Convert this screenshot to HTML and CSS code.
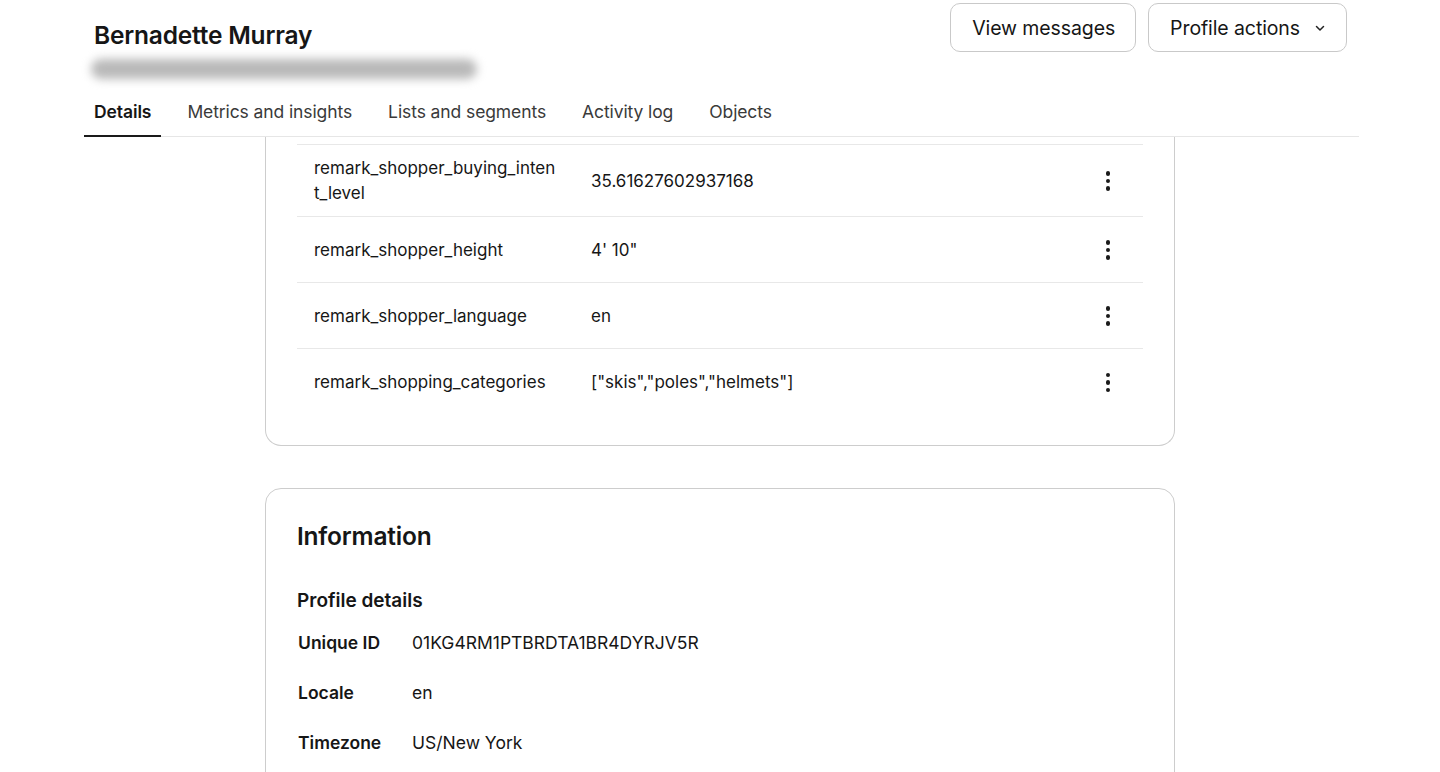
FILE: index.html
```html
<!DOCTYPE html>
<html lang="en">
<head>
<meta charset="utf-8">
<title>Bernadette Murray – Profile</title>
<link rel="stylesheet" href="styles.css">
</head>
<body>
<div class="page">
  <header class="profile-header">
    <div class="top">
      <div class="identity">
        <h1 class="name">Bernadette Murray</h1>
        <div class="email-redacted"></div>
      </div>
      <div class="actions">
        <button class="btn">View messages</button>
        <button class="btn">Profile actions
          <svg class="chev" width="12" height="12" viewBox="0 0 12 12" aria-hidden="true"><path d="M2.5 4.5 6 8l3.5-3.5" fill="none" stroke="currentColor" stroke-width="1.5" stroke-linecap="round" stroke-linejoin="round"/></svg>
        </button>
      </div>
    </div>
    <nav class="tabs">
      <a class="tab active">Details</a>
      <a class="tab">Metrics and insights</a>
      <a class="tab">Lists and segments</a>
      <a class="tab">Activity log</a>
      <a class="tab">Objects</a>
    </nav>
  </header>

  <main class="content">
    <section class="card card-cont">
      <div class="prop-list">
        <div class="prop-row">
          <div class="prop-key">remark_shopper_buying_intent_level</div>
          <div class="prop-val">35.61627602937168</div>
          <button class="more" aria-label="More"><span></span><span></span><span></span></button>
        </div>
        <div class="prop-row">
          <div class="prop-key">remark_shopper_height</div>
          <div class="prop-val">4' 10"</div>
          <button class="more" aria-label="More"><span></span><span></span><span></span></button>
        </div>
        <div class="prop-row">
          <div class="prop-key">remark_shopper_language</div>
          <div class="prop-val">en</div>
          <button class="more" aria-label="More"><span></span><span></span><span></span></button>
        </div>
        <div class="prop-row">
          <div class="prop-key">remark_shopping_categories</div>
          <div class="prop-val">["skis","poles","helmets"]</div>
          <button class="more" aria-label="More"><span></span><span></span><span></span></button>
        </div>
      </div>
    </section>

    <section class="card info">
      <h2 class="card-title">Information</h2>
      <h3 class="sub-title">Profile details</h3>
      <dl class="details">
        <div class="detail-row"><dt>Unique ID</dt><dd>01KG4RM1PTBRDTA1BR4DYRJV5R</dd></div>
        <div class="detail-row"><dt>Locale</dt><dd>en</dd></div>
        <div class="detail-row"><dt>Timezone</dt><dd>US/New York</dd></div>
      </dl>
    </section>
  </main>
</div>
</body>
</html>
```

FILE: styles.css
```css
* { box-sizing: border-box; }

html, body {
  margin: 0;
  padding: 0;
  background: #fff;
  color: #161616;
  font-family: Inter, "Noto Sans", "Liberation Sans", sans-serif;
  overflow: hidden;
}

.page {
  width: 1275px;
  margin-left: 84px;
}

/* header */
.top {
  display: flex;
  justify-content: space-between;
  align-items: flex-start;
  padding: 3px 12px 0 10px;
}

.identity { padding-top: 17px; }

.name {
  margin: 0;
  font-size: 24.5px;
  line-height: 30px;
  font-weight: 600;
  letter-spacing: -0.2px;
}

.email-redacted {
  margin-top: 9px;
  width: 386px;
  height: 20px;
  margin-left: -3px;
  border-radius: 10px;
  background: #b9b9b9;
  filter: blur(5px);
}

.actions { display: flex; gap: 12px; }

.btn {
  display: inline-flex;
  align-items: center;
  gap: 14px;
  height: 49px;
  padding: 0 20px 0 21px;
  border: 1px solid #c9c9c9;
  border-radius: 10px;
  background: #fff;
  color: #161616;
  font-family: inherit;
  font-size: 19.5px;
  letter-spacing: -0.1px;
}

.chev { color: #222; }

/* tabs */
.tabs {
  display: flex;
  gap: 16px;
  margin-top: 8px;
  border-bottom: 1px solid #e6e6e6;
}

.tab {
  padding: 12px 10px 11px;
  margin-bottom: -1px;
  font-size: 17.5px;
  line-height: 25px;
  color: #3a3a3a;
  border-bottom: 2px solid transparent;
  letter-spacing: -0.1px;
}

.tab.active {
  font-weight: 600;
  color: #161616;
  border-bottom-color: #1a1a1a;
}

/* cards */
.content { margin-left: -84px; width: 1440px; }

.card {
  width: 910px;
  margin: 0 auto;
  border: 1px solid #cdcdcd;
  border-radius: 16px;
  padding: 0 31px;
}

.card-cont {
  border-top: none;
  border-radius: 0 0 16px 16px;
  padding-top: 7px;
  padding-bottom: 30px;
}

.prop-row {
  display: grid;
  grid-template-columns: 245px 1fr 24px;
  column-gap: 32px;
  align-items: center;
  min-height: 66px;
  padding: 11px 23px 10px 17px;
  border-bottom: 1px solid #e8e8e8;
  font-size: 17px;
  line-height: 25px;
}

.prop-row:first-child { border-top: 1px solid #e8e8e8; }
.prop-row:last-child { border-bottom: none; }

.prop-key { word-break: break-all; }

.more {
  display: flex;
  flex-direction: column;
  align-items: center;
  gap: 3px;
  width: 24px;
  padding: 0;
  border: 0;
  background: none;
}

.more span {
  width: 4.5px;
  height: 4.5px;
  border-radius: 50%;
  background: #1a1a1a;
}

.info {
  margin-top: 42px;
  padding-top: 32px;
  padding-bottom: 40px;
}

.card-title {
  margin: 0;
  font-size: 24.5px;
  line-height: 30px;
  font-weight: 600;
  letter-spacing: -0.2px;
}

.sub-title {
  margin: 37px 0 0;
  font-size: 19px;
  line-height: 26px;
  font-weight: 600;
}

.details { margin: 3px 0 0; }

.detail-row {
  display: grid;
  grid-template-columns: 114px 1fr;
  align-items: center;
  height: 50px;
  padding-left: 1px;
  font-size: 17.5px;
}

.detail-row dt { font-weight: 600; }
.detail-row dd { margin: 0; }
```
